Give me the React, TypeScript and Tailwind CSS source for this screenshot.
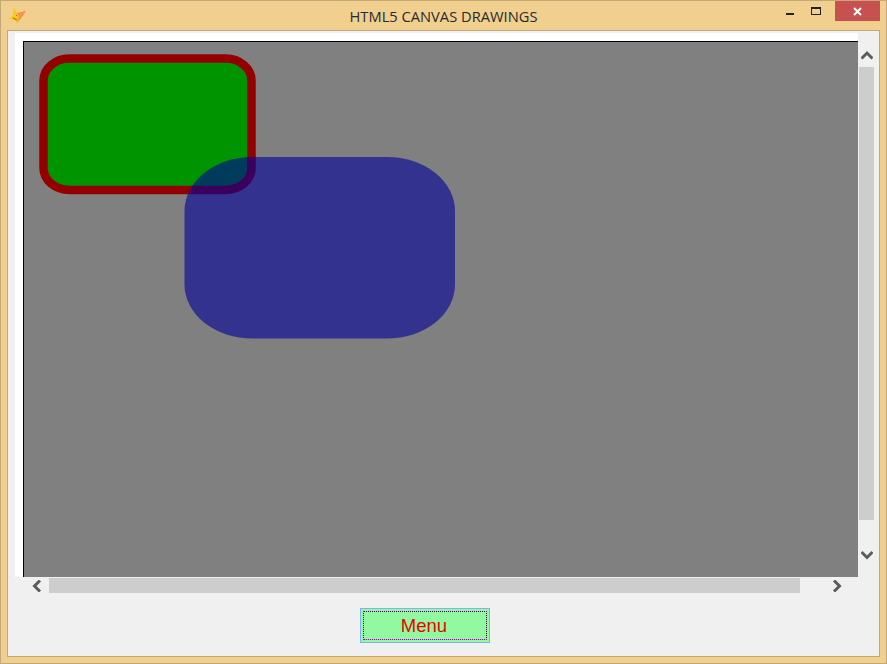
import React from 'react';

function Chevron({ d }: { d: string }) {
  return (
    <svg width="12" height="12" viewBox="0 0 12 12" className="shrink-0">
      <path d={d} fill="none" stroke="#5c5c5c" strokeWidth="3" />
    </svg>
  );
}

function FoxIcon() {
  return (
    <svg width="18" height="18" viewBox="0 0 18 18">
      <path d="M5 1 L8 6 L17 4 L13 10 L8 16 L6 13 L1 12 L4 8 Z" fill="#f8c818" />
      <path d="M8 6 L17 4 L13 10 L8 16 L10 10 Z" fill="#f49058" />
      <path d="M4 11 L8 13 M7 8 L8 9" stroke="#a06a10" strokeWidth="1" />
    </svg>
  );
}

export default function App() {
  return (
    <div className="w-[887px] h-[664px] flex flex-col bg-[#f0cf8f] border border-[#c4a878] font-['Liberation_Sans',sans-serif]">
      {/* Title bar */}
      <div className="h-[29px] shrink-0 grid grid-cols-[1fr_auto_1fr]">
        <div className="pl-[8px] pt-[6px]">
          <FoxIcon />
        </div>
        <div className="pt-[5px] text-[14.7px] leading-[20px] text-[#2a2a2a] font-['Open_Sans',sans-serif]">
          HTML5 CANVAS DRAWINGS
        </div>
        <div className="flex justify-end items-start pr-[6px]">
          <div className="w-[26px] h-[20px] flex justify-center pt-[12px]">
            <div className="w-[8px] h-[2px] bg-[#222222]" />
          </div>
          <div className="w-[26px] h-[20px] flex justify-center pt-[6px] mr-[6px]">
            <div className="w-[10px] h-[8px] border border-t-2 border-[#222222]" />
          </div>
          <div className="w-[45px] h-[20px] bg-[#c75050] flex items-center justify-center">
            <svg width="9" height="9" viewBox="0 0 9 9">
              <path d="M1 1 L8 8 M8 1 L1 8" stroke="#ffffff" strokeWidth="2" />
            </svg>
          </div>
        </div>
      </div>

      {/* Client area */}
      <div className="flex-1 mx-[6px] mb-[6px] border border-[#c4a878] bg-[#f0f0f0] pt-[2px] flex flex-col">
        <div className="h-[544px] flex ml-[7px]">
          <div className="w-[843px] bg-white pl-[8px] pt-[8px]">
            <div className="w-[835px] h-[536px] bg-[#808080] border-t border-l border-black">
              <svg width="834" height="535" viewBox="24 42 834 535" className="block">
                <rect x="43.5" y="58.5" width="208" height="131.5" rx="26" ry="22" fill="#009400" stroke="#940000" strokeWidth="8.5" />
                <rect x="184.5" y="157" width="270.5" height="181.5" rx="68" ry="54" fill="#000099" fillOpacity="0.6" />
              </svg>
            </div>
          </div>
          {/* Vertical scrollbar */}
          <div className="w-[17px] flex flex-col items-center">
            <div className="h-[34px] flex items-end pb-[6px]">
              <Chevron d="M0.5 9.5 L6 4 L11.5 9.5" />
            </div>
            <div className="w-[15px] h-[453px] bg-[#cdcdcd]" />
            <div className="h-[57px] flex items-end pb-[16px]">
              <Chevron d="M0.5 3 L6 8.5 L11.5 3" />
            </div>
          </div>
        </div>

        {/* Horizontal scrollbar */}
        <div className="h-[15px] mt-[1px] flex items-center ml-[23px]">
          <Chevron d="M9 0.5 L3.5 6 L9 11.5" />
          <div className="w-[751px] h-[15px] ml-[6px] bg-[#cdcdcd]" />
          <div className="ml-[31px]">
            <Chevron d="M3 0.5 L8.5 6 L3 11.5" />
          </div>
        </div>

        <div className="mt-[15px] flex ml-[352px]">
          <button className="w-[130px] h-[35px] p-[2px] bg-[#93f9a0] border border-[#7fb4ec]">
            <span className="h-full flex items-center justify-center pr-[2px] border border-dotted border-t-[#400070] border-l-[#300040] border-b-[#a000c0] border-r-[#300040] text-[18.5px] text-[#ee0000]">
              Menu
            </span>
          </button>
        </div>
      </div>
    </div>
  );
}
